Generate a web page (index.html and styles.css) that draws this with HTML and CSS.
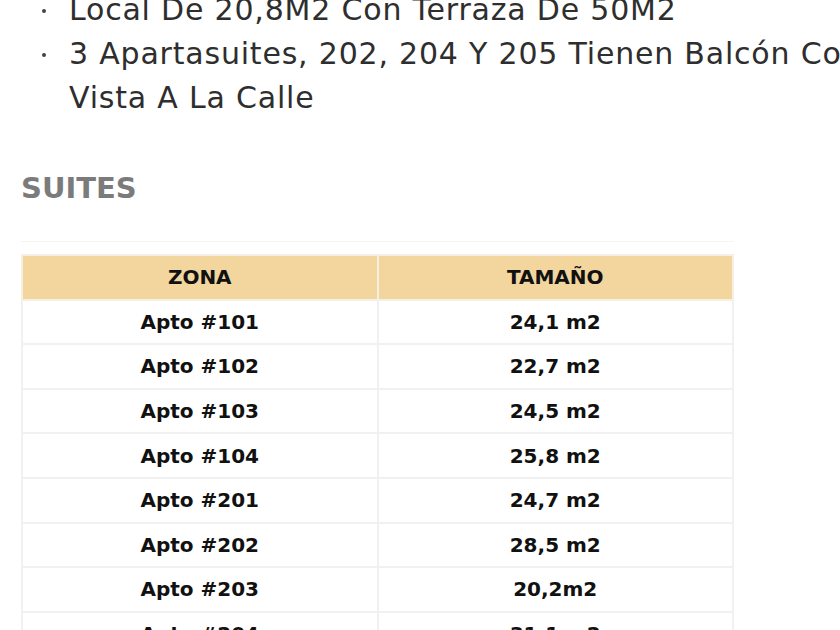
FILE: index.html
```html
<!DOCTYPE html>
<html lang="es">
<head>
<meta charset="utf-8">
<link rel="stylesheet" href="styles.css">
</head>
<body>
<div class="page">
  <ul class="features">
    <li>Local De 20,8M2 Con Terraza De 50M2</li>
    <li>3 Apartasuites, 202, 204 Y 205 Tienen Balcón Con Vista A La Calle</li>
  </ul>
  <h2 class="section-title">SUITES</h2>
  <div class="table-wrap">
    <table class="suites">
      <thead>
        <tr><th>ZONA</th><th>TAMAÑO</th></tr>
      </thead>
      <tbody>
        <tr><td>Apto #101</td><td>24,1 m2</td></tr>
        <tr><td>Apto #102</td><td>22,7 m2</td></tr>
        <tr><td>Apto #103</td><td>24,5 m2</td></tr>
        <tr><td>Apto #104</td><td>25,8 m2</td></tr>
        <tr><td>Apto #201</td><td>24,7 m2</td></tr>
        <tr><td>Apto #202</td><td>28,5 m2</td></tr>
        <tr><td>Apto #203</td><td>20,2m2</td></tr>
        <tr><td>Apto #204</td><td>31,1 m2</td></tr>
      </tbody>
    </table>
  </div>
</div>
</body>
</html>
```
FILE: styles.css
```css
html, body {
  margin: 0;
  padding: 0;
  background: #ffffff;
}
body {
  font-family: "DejaVu Sans", "Open Sans", sans-serif;
  color: #222222;
  width: 840px;
  overflow: hidden;
}
.page {
  padding: 0 0 0 21px;
  margin-top: -12px;
}
.features {
  margin: 0;
  padding: 0 0 0 48px;
  list-style: none;
  width: 810px;
  font-size: 30px;
  letter-spacing: 0.8px;
  line-height: 44px;
  color: #2e2e2e;
}
.features li {
  position: relative;
}
.features li::before {
  content: "";
  position: absolute;
  left: -27px;
  top: 21px;
  width: 4px;
  height: 4px;
  border-radius: 50%;
  background: #444;
}
.section-title {
  margin: 46px 0 0 0;
  font-size: 29px;
  line-height: 44px;
  font-weight: 700;
  color: #7b7b7b;
}
.table-wrap {
  margin-top: 31px;
  width: 713px;
  border-top: 1px solid #f6f4ef;
  padding-top: 12px;
}
.suites {
  width: 713px;
  border-collapse: collapse;
  table-layout: fixed;
}
.suites th, .suites td {
  border: 2px solid #f1f1f1;
  height: 42.6px;
  padding: 0;
  text-align: center;
  font-size: 20px;
  font-weight: 700;
  color: #111111;
}
.suites th {
  background: #f3d59e;
  border-color: #f6efe3;
}
```
